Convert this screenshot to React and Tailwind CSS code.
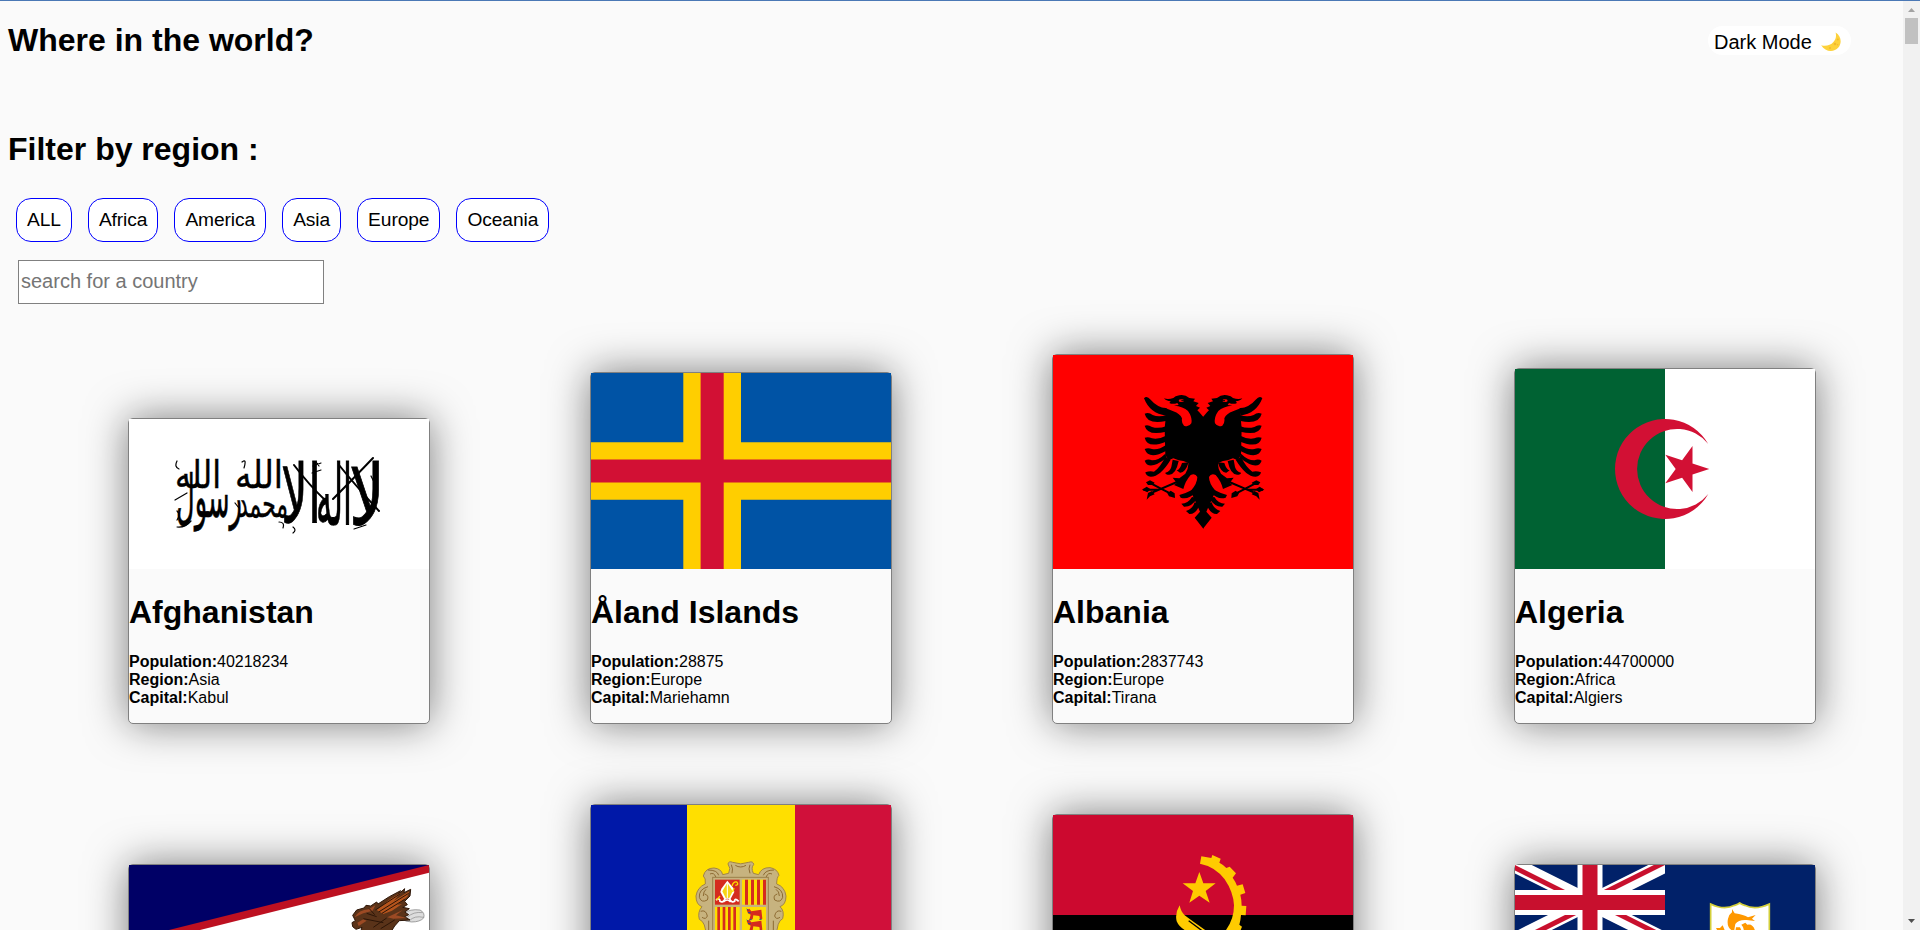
const motto = [
  { word: "لا", x: 238, y: 106, sy: 3.1, width: 36 },
  { word: "اله", x: 205, y: 106, sy: 3.1, width: 36 },
  { word: "الا", x: 172, y: 104, sy: 3, width: 40 },
  { word: "الله", x: 130, y: 69, sy: 1.4, width: 48 },
  { word: "محمد", x: 134, y: 98, sy: 1.4, width: 50 },
  { word: "رسول", x: 80, y: 98, sy: 2.2, width: 66 },
  { word: "الله", x: 69, y: 69, sy: 1.4, width: 46 },
];

const AfghanistanFlag = () => (
  <svg viewBox="0 0 300 150" className="block h-[150px] w-[300px]">
    <rect width="300" height="150" fill="#fff" />
    <g fontFamily="'DejaVu Sans', sans-serif" fontSize="27" textAnchor="middle" stroke="#000" strokeWidth="0.3">
      {motto.map(({ word, x, y, sy, width }, i) => (
        <text key={i} transform={`translate(${x} ${y}) scale(1 ${sy})`} textLength={width} lengthAdjust="spacingAndGlyphs">
          {word}
        </text>
      ))}
    </g>
    <g fill="none" stroke="#000" strokeLinecap="round">
      <path d="M210 46 Q226 66 250 92 M244 39 Q222 62 204 80 M165 46 Q180 66 197 82" strokeWidth="2" />
      <path d="M184 47 l8 -3 M187 43 l3 4 M183 54 l9 -3 M113 43 q5 -4 2 6 M48 42 q-3 6 2 8 M46 81 l12 -7 M48 92 q4 4 0 9 M106 84 l4 5 M242 57 l3 6 M164 108 q4 3 0 6 M150 103 q6 0 4 6 M225 110 l12 -4 M48 108 q8 1 14 -6" strokeWidth="1.2" />
    </g>
  </svg>
);

const AlandFlag = () => (
  <svg viewBox="0 0 26 17" preserveAspectRatio="none" className="block h-[196px] w-[300px]">
    <rect width="26" height="17" fill="#0053a5" />
    <path d="M8 0h5v17h-5zM0 6h26v5H0z" fill="#ffce00" />
    <path d="M9.5 0h2v17h-2zM0 7.5h26v2H0z" fill="#d21034" />
  </svg>
);

const EagleHalf = () => (
  <g>
    <path d="M250 126 L238 112 L232 106 L240 98 L228 93 L236 84 L220 79 L225 71 L208 69 Q195 58 178 61 Q165 63 160 69 Q145 74 132 70 Q138 78 152 79 L148 84 Q158 89 172 84 L176 90 L162 92 Q190 94 204 108 Q218 128 214 145 Q206 158 192 152 Q184 146 186 130 Q180 116 160 109 L134 98 L138 120 L134 160 L136 240 L146 256 L160 250 L176 256 L190 258 L205 264 Q206 280 196 296 L178 310 L158 308 L170 324 L162 330 L190 342 Q196 318 212 300 Q226 294 232 306 Q232 326 212 348 L240 410 L224 428 L250 461 Z" />
    <path d="M72 70 Q80 60 92 74 Q110 96 140 100 L138 122 Q90 116 72 70Z" />
    <path d="M74 116 Q86 110 98 120 Q116 128 140 120 L138 138 Q82 150 74 116Z" />
    <path d="M74 152 Q84 148 96 156 Q116 162 138 154 V170 Q82 184 74 152Z" />
    <path d="M74 188 Q84 184 96 190 Q116 194 138 182 V200 Q82 222 74 188Z" />
    <path d="M74 222 Q84 217 96 222 Q116 226 138 210 V228 Q86 256 74 222Z" />
    <path d="M74 257 Q84 250 96 256 Q116 256 136 236 L140 248 Q86 290 74 257Z" />
    <path d="M76 292 Q90 286 102 290 Q120 278 136 246 L152 254 Q120 306 92 305 Q78 304 76 292Z" />
    <path d="M136 293 Q150 290 154 276 L158 254 L176 258 Q168 298 148 299 Q136 299 136 293Z" />
    <path d="M170 286 Q180 284 186 264 L206 262 Q196 294 180 293Z" />
    <path d="M178 360 Q196 356 214 346 L228 352 Q204 376 182 368Z" />
    <path d="M184 386 Q204 386 216 366 L232 368 Q216 396 192 395Z" />
    <path d="M198 408 Q218 402 224 382 L240 388 Q228 418 208 417Z" />
    <path d="M178 318 L98 352 M94 326 L156 358 M70 344 H118" fill="none" stroke="#000" strokeWidth="6" />
    <path d="M66 344 l14 -9 12 8 -10 9z M78 322 l12 -6 14 7 -6 7 -14 0z M142 355 l10 -8 12 8 1 14 -18 -5z M80 374 l4 -20 12 -6 8 10 -14 6z" />
    <ellipse cx="184" cy="77" rx="8" ry="4" fill="#f00" />
    <path d="M184 77 h9" stroke="#000" strokeWidth="3" />
  </g>
);

const AlbaniaFlag = () => (
  <svg viewBox="0 0 300 214" className="block h-[214px] w-[300px]">
    <rect width="300" height="214" fill="#f00" />
    <g transform="translate(67 20) scale(.33333)">
      <EagleHalf />
      <g transform="translate(499 0) scale(-1 1)">
        <EagleHalf />
      </g>
    </g>
  </svg>
);

const AlgeriaFlag = () => (
  <svg viewBox="0 0 300 200" className="block h-[200px] w-[300px]">
    <rect width="300" height="200" fill="#fff" />
    <rect width="150" height="200" fill="#006233" />
    <path d="M193.3 75 A50 50 0 1 0 193.3 125 A40 40 0 1 1 193.3 75Z" fill="#d21034" />
    <path d="M194.3 100 L177.5 94.5 V76.9 L167.1 91.2 L150.3 85.7 L160.7 100 L150.3 114.3 L167.1 108.8 L177.5 123.1 V105.5Z" fill="#d21034" />
  </svg>
);

const SamoaFlag = () => (
  <svg viewBox="0 0 300 150" className="block h-[150px] w-[300px]">
    <rect width="300" height="150" fill="#006" />
    <path d="M300 0 L0 75 L300 150Z" fill="#bd1021" />
    <path d="M300 7.8 L31 75 L300 142Z" fill="#fff" />
    <g transform="translate(-29 -35) scale(.33333)">
      <path d="M912 250 Q930 236 960 240 Q976 248 971 264 Q960 276 935 276 Q916 276 906 266Z" fill="#ddd" stroke="#777" strokeWidth="2" />
      <path d="M922 262 Q940 244 968 248 M928 272 Q944 256 970 262" fill="none" stroke="#888" strokeWidth="2" />
      <path d="M758 256 L770 240 L792 234 L798 226 L812 228 L830 216 L834 222 L868 200 L902 182 L894 194 L914 176 L912 188 L932 178 L930 198 L914 214 L922 224 L908 232 L928 236 L914 246 L926 254 L914 260 L930 270 L898 272 L884 288 L870 310 H780 L786 292 L768 298 L758 290 L756 278 L766 272Z" fill="#5a3319" stroke="#2c1507" strokeWidth="3" />
      <path d="M830 240 L872 206 L902 188 L882 212 L928 184 L922 200 L892 224 L906 222 L876 242 L850 252Z" fill="#b5541c" />
      <path d="M764 262 Q776 240 806 238 L826 226 L818 242 L790 250Z M862 262 L908 240 L888 256 L920 264 L880 266Z M772 278 L790 268 L800 272 L776 288Z" fill="#9c4a24" />
      <path d="M826 240 L900 192 M836 246 L926 190 M846 250 L914 208 M800 250 L830 260 M790 266 L850 278 M820 292 L860 264 M842 296 L884 270 M808 236 L824 254" stroke="#2c1507" strokeWidth="3" fill="none" />
    </g>
  </svg>
);

const AndorraFlag = () => (
  <svg viewBox="0 0 300 210" className="block h-[210px] w-[300px]">
    <rect width="96" height="210" fill="#0018a8" />
    <rect x="96" width="108" height="210" fill="#ffdf00" />
    <rect x="204" width="96" height="210" fill="#d0103a" />
    <g transform="translate(69 -15) scale(.33333)">
      <path d="M204 222 Q206 212 218 217 Q242 226 266 217 Q280 212 281 224 Q272 232 280 250 L296 254 Q304 232 330 233 Q352 236 357 256 Q350 262 350 282 Q374 290 378 318 Q378 344 360 350 Q374 362 368 386 Q350 394 350 440 H138 Q138 396 118 388 Q112 366 126 350 Q108 344 108 318 Q112 292 136 282 Q138 264 130 258 Q136 234 162 234 Q184 236 188 254 L206 250 Q214 234 204 222Z" fill="#c7b37f" stroke="#a08449" strokeWidth="3" />
      <path d="M214 224 Q220 236 216 250 M270 224 Q264 236 270 250 M226 226 Q242 236 258 226 M144 240 Q172 240 176 256 M150 252 Q162 246 168 262 M342 240 Q316 240 310 256 M336 252 Q324 246 318 262 M144 290 Q116 298 118 322 Q124 340 142 330 Q148 316 134 312 M342 290 Q370 298 368 322 Q362 340 344 330 Q338 316 352 312 M122 364 Q138 358 142 378 Q138 390 126 382 M364 364 Q348 358 344 378 Q348 390 360 382 M138 298 Q130 304 130 318 M348 298 Q358 304 358 318 M146 392 V420 M340 392 V420" fill="none" stroke="#8d6a32" strokeWidth="3" />
      <rect x="158" y="262" width="167" height="190" fill="#c7b37f" stroke="#9b804b" strokeWidth="3" />
      <rect x="165" y="269" width="74" height="75" fill="#d52b1e" />
      <rect x="246" y="269" width="72" height="75" fill="#fedd00" />
      <path d="M255 269h9v75h-9zM273 269h9v75h-9zM291 269h9v75h-9zM309 269h9v75h-9z" fill="#d52b1e" />
      <rect x="165" y="351" width="74" height="90" fill="#fedd00" />
      <path d="M172 351h8v90h-8zM188 351h8v90h-8zM204 351h8v90h-8zM220 351h8v90h-8z" fill="#d52b1e" />
      <rect x="246" y="351" width="72" height="90" fill="#fedd00" />
      <path d="M202 272 L184 296 L181 306 L192 326 H212 L223 306 L220 294Z" fill="#fff" />
      <path d="M202 278 L187 304 L197 324 H208 L218 304Z" fill="#f7d417" />
      <path d="M202 278 V324" stroke="#fff" strokeWidth="3" />
      <path d="M168 330 Q180 322 180 334 Q190 340 196 324 M236 334 Q224 322 224 334 Q214 340 208 324 M190 336 Q202 324 212 336" fill="none" stroke="#fff" strokeWidth="5" />
      <path d="M216 288 Q220 274 230 276 Q238 284 226 286 M222 294 L218 306 M180 318 L170 330" fill="none" stroke="#fedd00" strokeWidth="4" />
      {[0, 33].map((y) => (
        <g key={y} transform={`translate(0 ${y})`}>
          <path d="M260 360 L268 356 L274 364 L304 359 L307 386 L300 388 L298 378 L280 376 L278 388 L268 389 L272 374 L264 370Z" fill="#d52b1e" />
          <path d="M260 357 l5 4 M264 368 h8 M268 389 h7 M298 388 h7" stroke="#1a4f9c" strokeWidth="3" />
        </g>
      ))}
    </g>
  </svg>
);

const AngolaFlag = () => (
  <svg viewBox="0 0 300 200" className="block h-[200px] w-[300px]">
    <rect width="300" height="100" fill="#cc092f" />
    <rect y="100" width="300" height="100" />
    <g transform="translate(77 -15) scale(.33333)" fill="#ffcb00">
      <path d="M214 169 L244 174 L247 165 L272 176 L268 188 Q280 194 289 204 L299 200 L318 220 L308 233 Q316 244 321 257 L338 253 L346 279 L331 284 Q335 300 335 317 L349 318 L347 346 L333 345 Q332 360 328 374 L336 380 L328 400 H280 Q312 364 312 316 Q310 276 284 238 Q256 200 210 191Z" />
      <path d="M208 216 L220 250 H257 L227 273 L239 308 L208 287 L178 308 L189 273 L158 250 H196Z" />
      <path d="M149 316 Q134 340 140 364 Q150 388 186 400 H240 Q190 366 164 346 Q152 334 149 316Z" />
      <path d="M176 362 L216 392" stroke="#000" strokeWidth="4" />
    </g>
  </svg>
);

const AnguillaFlag = () => (
  <svg viewBox="0 0 300 150" className="block h-[150px] w-[300px]">
    <rect width="300" height="150" fill="#012169" />
    <svg width="150" height="75" viewBox="0 0 60 30" preserveAspectRatio="none">
      <clipPath id="canton-quarters">
        <path d="M30 15h30v15zv15H0zH0V0zV0h30z" />
      </clipPath>
      <path d="M0 0l60 30m0-30L0 30" stroke="#fff" strokeWidth="6" />
      <path d="M0 0l60 30m0-30L0 30" clipPath="url(#canton-quarters)" stroke="#c8102e" strokeWidth="4" />
      <path d="M30 0v30M0 15h60" stroke="#fff" strokeWidth="10" />
      <path d="M30 0v30M0 15h60" stroke="#c8102e" strokeWidth="6" />
    </svg>
    <g transform="translate(-35 -25) scale(.33333)">
      <path d="M692 192 Q732 212 764 196 Q774 193 779 189 Q784 193 794 196 Q826 212 868 192 V330 H692Z" fill="#fff" stroke="#d3cf3b" strokeWidth="5" />
      <path d="M756 207 L764 220 Q792 224 804 232 L827 225 L816 236 L825 243 L800 240 Q776 238 766 252 L762 275 Q738 264 744 236 Q748 222 756 217Z" fill="#ff9800" />
      <path d="M784 254 L796 248 L802 254 Q820 250 826 275 H790 Q794 264 784 254Z M708 264 L720 264 L728 256 L736 275 H714Z M768 262 L780 262 L786 275 H766Z" fill="#ff9800" />
    </g>
  </svg>
);

const Moon = () => (
  <svg viewBox="0 0 20 20" className="mt-[3px] h-5 w-5">
    <path d="M14.6 .6 C20.4 4 21 11.4 17.4 15.6 C13 20.6 4.2 20.2 .2 13.2 C4.4 14.6 9.6 13.4 12.4 10 C14.8 7.2 15.6 4 14.6 .6Z" fill="#fdd23b" />
    <circle cx="16.8" cy="7.6" r="1" fill="#f4b92c" />
    <circle cx="14" cy="12" r="1.3" fill="#f4b92c" />
    <circle cx="9" cy="15.9" r="1" fill="#f4b92c" />
    <circle cx="16.6" cy="12.8" r=".8" fill="#f4b92c" />
  </svg>
);

const countries = [
  { name: "Afghanistan", population: 40218234, region: "Asia", capital: "Kabul", Flag: AfghanistanFlag },
  { name: "Åland Islands", population: 28875, region: "Europe", capital: "Mariehamn", Flag: AlandFlag },
  { name: "Albania", population: 2837743, region: "Europe", capital: "Tirana", Flag: AlbaniaFlag },
  { name: "Algeria", population: 44700000, region: "Africa", capital: "Algiers", Flag: AlgeriaFlag },
  { name: "American Samoa", Flag: SamoaFlag },
  { name: "Andorra", Flag: AndorraFlag },
  { name: "Angola", Flag: AngolaFlag },
  { name: "Anguilla", Flag: AnguillaFlag },
];

const regions = ["ALL", "Africa", "America", "Asia", "Europe", "Oceania"];

function CountryCard({ name, population, region, capital, Flag }) {
  return (
    <article className="w-[302px] rounded-[5px] border border-[#808080] bg-[#fafafa] shadow-[0_0_42px_#7c7c7c]">
      <Flag />
      <div className="h-[154px] pt-[25px]">
        {population && (
          <>
            <h2 className="text-[32px] leading-[37px] font-bold">{name}</h2>
            <div className="mt-[22px] text-base leading-[18px]">
              <p><b>Population:</b>{population}</p>
              <p><b>Region:</b>{region}</p>
              <p><b>Capital:</b>{capital}</p>
            </div>
          </>
        )}
      </div>
    </article>
  );
}

export default function App() {
  return (
    <div className="flex h-[930px] w-[1920px] flex-col overflow-hidden border-t border-[#4a78b5] bg-[#fafafa] font-['Liberation_Sans',Arial,sans-serif] text-black">
      <div className="flex min-h-0 flex-1">
        <main className="w-[1903px] overflow-hidden">
          <header className="flex h-[130px] items-start justify-between pt-[21px] pr-[52px] pl-2">
            <h1 className="text-[32px] leading-[37px] font-bold">Where in the world?</h1>
            <button className="mt-1 flex h-[29px] w-[143px] items-center rounded-[15px] bg-white pl-[6px] text-[20px] leading-[25px]">
              <span className="w-[107px] pt-[4px] text-left">Dark Mode</span>
              <Moon />
            </button>
          </header>
          <section>
            <h1 className="pl-2 text-[32px] leading-[37px] font-bold">Filter by region :</h1>
            <div className="mt-[30px] flex gap-4 pl-4">
              {regions.map((r) => (
                <button key={r} className="h-11 rounded-[15px] border border-[#0000ff] bg-white px-[10px] text-[19.2px] leading-[42px] tracking-[-0.09px]">
                  {r}
                </button>
              ))}
            </div>
            <input
              className="mt-[18px] ml-[18px] block h-11 w-[306px] border border-[#808080] bg-white px-[2px] pb-[2px] text-[20px] placeholder:text-[#757575]"
              placeholder="search for a country"
            />
          </section>
          <section className="mt-[50px] grid grid-cols-[repeat(4,302px)] items-end gap-x-40 gap-y-20 pl-32">
            {countries.map((c) => (
              <CountryCard key={c.name} {...c} />
            ))}
          </section>
        </main>
        <aside className="flex w-[17px] flex-col items-center justify-between bg-[#f1f1f1] pt-[7px] pb-[7px]">
          <div className="flex flex-col items-center gap-[6px]">
            <svg viewBox="0 0 7 4" className="h-1 w-[7px]"><path d="M3.5 0L7 4H0z" fill="#a3a3a3" /></svg>
            <div className="h-[26px] w-[13px] bg-[#c1c1c1]" />
          </div>
          <svg viewBox="0 0 7 4" className="h-1 w-[7px]"><path d="M3.5 4L7 0H0z" fill="#505050" /></svg>
        </aside>
      </div>
    </div>
  );
}
